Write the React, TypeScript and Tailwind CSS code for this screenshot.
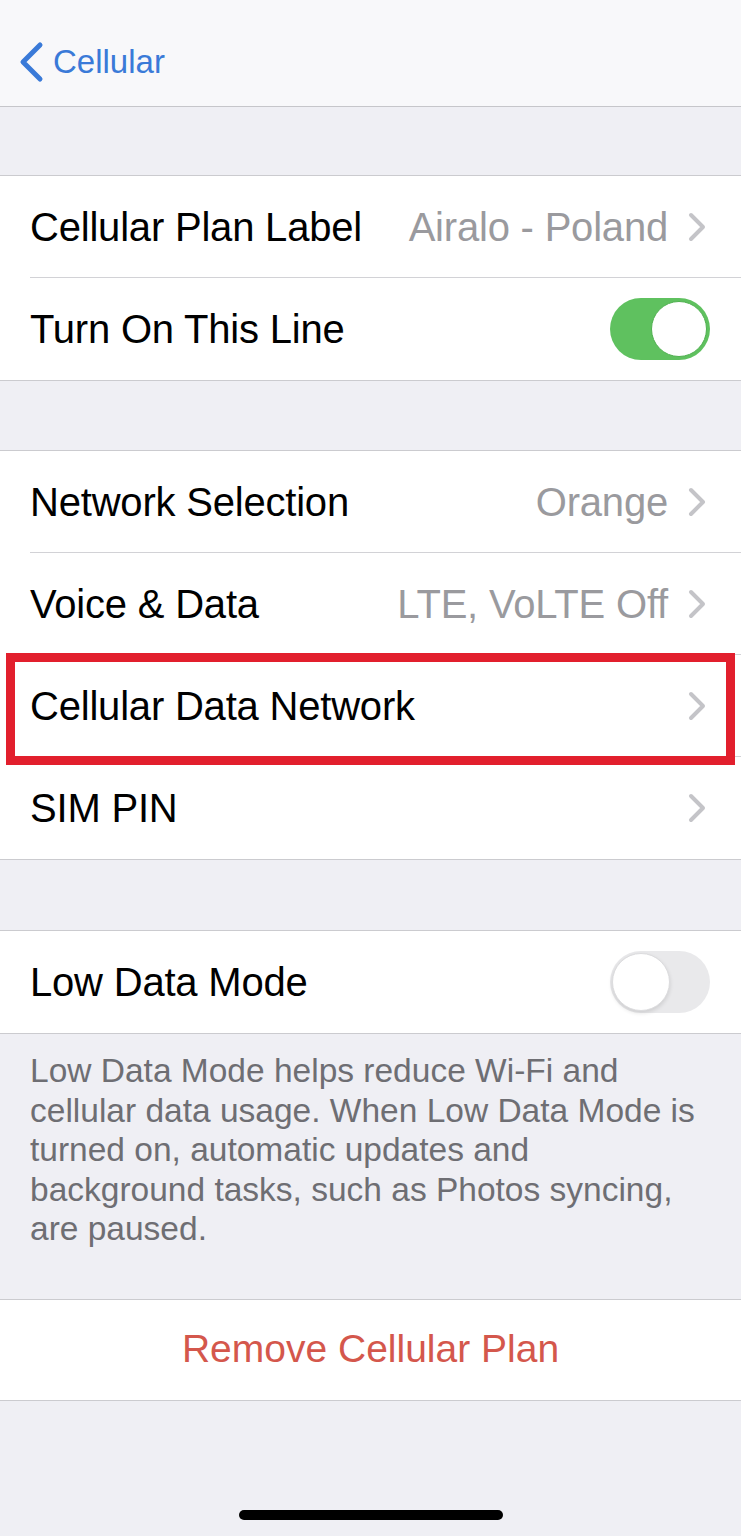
import React from "react";

const font = { fontFamily: '"Liberation Sans", Arial, sans-serif' };

function Chevron() {
  return (
    <svg width="18" height="30" viewBox="0 0 18 30" className="shrink-0">
      <path
        d="M3 3 L15 15 L3 27"
        fill="none"
        stroke="#c4c4c8"
        strokeWidth="4"
        strokeLinecap="round"
        strokeLinejoin="round"
      />
    </svg>
  );
}

function Toggle({ on }: { on: boolean }) {
  return on ? (
    <div className="w-[100px] h-[62px] rounded-full bg-[#5fc15f] flex items-center justify-end pr-[3px]">
      <div className="w-[56px] h-[56px] rounded-full bg-white border border-[#4fb04f]" />
    </div>
  ) : (
    <div className="w-[100px] h-[62px] rounded-full bg-[#e9e9eb] flex items-center pl-[2px]">
      <div className="w-[58px] h-[58px] rounded-full bg-white border border-[#dcdcde] shadow-[0_2px_4px_rgba(0,0,0,0.12)]" />
    </div>
  );
}

type Row = {
  label: string;
  value?: string;
  chevron?: boolean;
  toggle?: boolean;
  highlight?: boolean;
};

function Group({ rows }: { rows: Row[] }) {
  return (
    <div className="bg-white border-y border-[#cbcbcf]">
      {rows.map((row, i) => (
        <div key={row.label} className="relative pl-[30px]">
          <div
            className={`h-[102px] flex items-center pr-[31px] ${
              i < rows.length - 1 ? "border-b border-[#d2d2d6]" : ""
            }`}
          >
            <span className="flex-1 text-[40px] text-black tracking-[-0.2px]">{row.label}</span>
            {row.value && (
              <span className="text-[40px] text-[#9a9a9e] mr-[20px] tracking-[-0.2px]">{row.value}</span>
            )}
            {row.chevron && (
              <span className="mr-[4px] flex">
                <Chevron />
              </span>
            )}
            {row.toggle !== undefined && <Toggle on={row.toggle} />}
          </div>
          {/* red annotation box */}
          {row.highlight && (
            <div className="absolute left-[6px] right-[6px] top-[-2px] bottom-[-8px] border-[9px] border-[#e21f2d] pointer-events-none" />
          )}
        </div>
      ))}
    </div>
  );
}

export default function App() {
  return (
    <div className="w-[741px] h-[1536px] bg-[#efeff4] flex flex-col relative overflow-hidden" style={font}>
      {/* Header */}
      <header className="h-[107px] bg-[#f8f8fa] border-b border-[#c6c6ca] flex items-center pl-[18px] pt-[18px] gap-[9px]">
        <svg width="26" height="42" viewBox="0 0 26 42">
          <path
            d="M22 4 L5 21 L22 38"
            fill="none"
            stroke="#3a7ad8"
            strokeWidth="5"
            strokeLinecap="round"
            strokeLinejoin="round"
          />
        </svg>
        <span className="text-[33px] text-[#3a7ad8]">Cellular</span>
      </header>

      <div className="h-[68px]" />
      <Group
        rows={[
          { label: "Cellular Plan Label", value: "Airalo - Poland", chevron: true },
          { label: "Turn On This Line", toggle: true },
        ]}
      />

      <div className="h-[69px]" />
      <Group
        rows={[
          { label: "Network Selection", value: "Orange", chevron: true },
          { label: "Voice & Data", value: "LTE, VoLTE Off", chevron: true },
          { label: "Cellular Data Network", chevron: true, highlight: true },
          { label: "SIM PIN", chevron: true },
        ]}
      />

      <div className="h-[70px]" />
      <Group rows={[{ label: "Low Data Mode", toggle: false }]} />

      <p className="px-[30px] pt-[17px] text-[33.5px] leading-[39.5px] text-[#6e6e73]">
        Low Data Mode helps reduce Wi-Fi and
        <br />
        cellular data usage. When Low Data Mode is
        <br />
        turned on, automatic updates and
        <br />
        background tasks, such as Photos syncing,
        <br />
        are paused.
      </p>

      <div className="h-[50px]" />
      <div className="bg-white border-y border-[#cbcbcf] h-[102px] flex items-center justify-center">
        <span className="text-[39px] text-[#d4574c]">Remove Cellular Plan</span>
      </div>

      <div className="flex-1 flex items-end justify-center pb-[16px]">
        <div className="w-[264px] h-[10px] rounded-full bg-black" />
      </div>
    </div>
  );
}
